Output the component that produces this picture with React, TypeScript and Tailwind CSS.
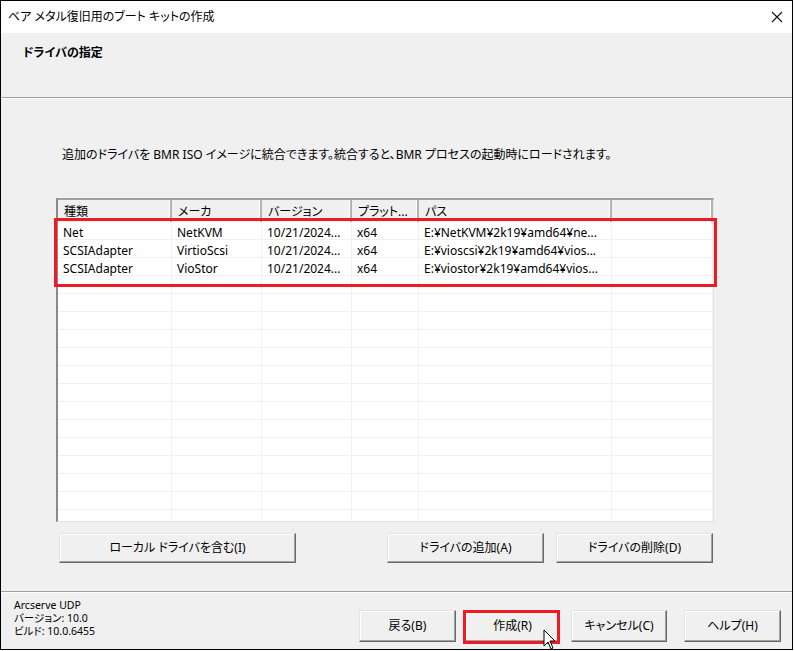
import React from "react";

const font = "font-['Noto_Sans','Noto_Sans_CJK_JP',sans-serif] [font-feature-settings:'palt']";

const cols = [
  { label: "種類", w: "w-[114px]" },
  { label: "メーカ", w: "w-[90px]" },
  { label: "バージョン", w: "w-[90px]" },
  { label: "プラット...", w: "w-[67px]" },
  { label: "パス", w: "w-[193px]" },
  { label: "", w: "flex-1" },
];

const rows = [
  ["Net", "NetKVM", "10/21/2024...", "x64", "E:¥NetKVM¥2k19¥amd64¥ne..."],
  ["SCSIAdapter", "VirtioScsi", "10/21/2024...", "x64", "E:¥vioscsi¥2k19¥amd64¥vios..."],
  ["SCSIAdapter", "VioStor", "10/21/2024...", "x64", "E:¥viostor¥2k19¥amd64¥vios..."],
];

function WinButton({ children, className }: { children: React.ReactNode; className?: string }) {
  return (
    <div
      className={`flex items-center justify-center bg-[#f0f0f0] border border-t-[#e3e3e3] border-l-[#e3e3e3] border-r-[#696969] border-b-[#696969] shadow-[inset_-1px_-1px_0_#a0a0a0,inset_1px_1px_0_#ffffff] text-[12px] text-black ${className ?? ""}`}
    >
      {children}
    </div>
  );
}

export default function App() {
  const filler = Array.from({ length: 15 });
  return (
    <div className={`w-[795px] h-[651px] bg-white ${font}`}>
      <div className="relative w-[793px] h-[650px] border border-black flex flex-col">
        {/* title bar */}
        <div className="h-[32px] flex items-center justify-between pl-[7px] pr-[8px] bg-white text-[12px] text-black">
          <span>ベア メタル復旧用のブート キットの作成</span>
          <svg width="12" height="12" viewBox="0 0 12 12" className="mr-[1px]">
            <path d="M1 1 L11 11 M11 1 L1 11" stroke="#111" strokeWidth="1.1" />
          </svg>
        </div>

        {/* header */}
        <div className="h-[64px] bg-[#f0f0f0] pl-[22px] pt-[12px] text-[12px] font-bold leading-[16px] text-black">
          ドライバの指定
        </div>
        <div className="h-[2px] border-t border-[#a0a0a0] bg-white" />

        {/* body */}
        <div className="flex-1 bg-[#f0f0f0] flex flex-col">
          <div className="pl-[61px] pt-[48px] text-[12px] leading-[16px] text-black">
            追加のドライバを BMR ISO イメージに統合できます。統合すると、BMR プロセスの起動時にロードされます。
          </div>

          <div className="relative ml-[55px] mt-[35px] w-[658px] h-[324px] border-t-2 border-l-2 border-t-[#a0a0a0] border-l-[#8a8a8a] border-r border-b border-r-[#e3e3e3] border-b-[#e3e3e3] bg-white overflow-hidden">
            <div className="flex h-[22px] bg-[#f0f0f0] text-[12px] text-black">
              {cols.map((c, i) => (
                <div
                  key={i}
                  className={`${c.w} shrink-0 flex items-center pl-[6px] pt-[1px] border-r-2 border-r-[#b4b4b4] shadow-[inset_-1px_0_0_#ffffff]`}
                >
                  {c.label}
                </div>
              ))}
            </div>
            {rows.map((r, i) => (
              <div key={i} className="flex h-[18px] border-b border-[#f0f0f0] text-[12px] leading-[14px] text-black">
                {cols.map((c, j) => (
                  <div key={j} className={`${c.w} shrink-0 flex items-center pl-[5px] pt-[4px] border-r border-[#f0f0f0] whitespace-nowrap`}>
                    {r[j] ?? ""}
                  </div>
                ))}
              </div>
            ))}
            {filler.map((_, i) => (
              <div key={i} className="flex h-[18px] border-b border-[#f0f0f0]">
                {cols.map((c, j) => (
                  <div key={j} className={`${c.w} shrink-0 border-r border-[#f0f0f0]`} />
                ))}
              </div>
            ))}
          </div>

          <div className="flex mt-[11px] h-[30px]">
            <WinButton className="ml-[58px] w-[237px]">ローカル ドライバを含む(I)</WinButton>
            <WinButton className="ml-[91px] w-[157px]">ドライバの追加(A)</WinButton>
            <WinButton className="ml-[12px] w-[157px]">ドライバの削除(D)</WinButton>
          </div>
        </div>

        <div className="h-[2px] border-t border-[#a0a0a0] bg-white" />

        {/* footer */}
        <div className="h-[56px] bg-[#f0f0f0] flex">
          <div className="pl-[13px] pt-[6px] text-[10.5px] leading-[13px] text-black w-[358px] shrink-0">
            <div className="h-[13px]">Arcserve UDP</div>
            <div className="h-[13px]">バージョン: 10.0</div>
            <div className="h-[13px]">ビルド: 10.0.6455</div>
          </div>
          <div className="flex pt-[17px] h-[50px]">
            <WinButton className="w-[97px] h-[32px]">戻る(B)</WinButton>
            <WinButton className="ml-[9px] w-[95px] h-[32px]">作成(R)</WinButton>
            <WinButton className="ml-[11px] w-[96px] h-[32px]">キャンセル(C)</WinButton>
            <WinButton className="ml-[17px] w-[97px] h-[32px]">ヘルプ(H)</WinButton>
          </div>
        </div>

        {/* annotations */}
        <div className="absolute left-[53px] top-[217px] w-[663px] h-[69px] border-[3px] border-[#ed1c24]" />
        <div className="absolute left-[462px] top-[609px] w-[97px] h-[34px] border-[3px] border-[#ed1c24]" />
        <svg className="absolute left-[542px] top-[628px]" width="14" height="22" viewBox="0 0 14 22">
          <path d="M1 1 L1 17 L5 13 L8 20 L10 19 L7 12 L12 12 Z" fill="#fff" stroke="#000" strokeWidth="1" />
        </svg>
      </div>
    </div>
  );
}
